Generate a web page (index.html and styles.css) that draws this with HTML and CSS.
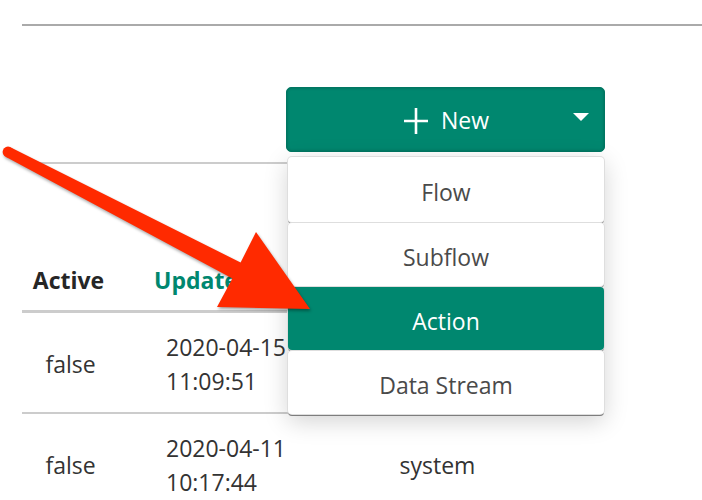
FILE: index.html
```html
<!DOCTYPE html>
<html>
<head>
<meta charset="utf-8">
<link rel="stylesheet" href="styles.css">
</head>
<body>
<div class="page">
  <div class="rule"></div>
  <div class="toolbar">
    <div class="new-wrap">
      <button class="new-btn">
        <svg class="plus" width="24" height="26" viewBox="0 0 24 26"><path d="M12 0V26M0 13H24" stroke="#fff" stroke-width="2.6" fill="none"/></svg>
        <span>New</span>
        <span class="caret"></span>
      </button>
      <div class="menu">
        <div class="item">Flow</div>
        <div class="item">Subflow</div>
        <div class="item active">Action</div>
        <div class="item">Data Stream</div>
      </div>
    </div>
  </div>
  <div class="table">
    <div class="row head">
      <div class="cell c1">Active</div>
      <div class="cell c2 sorted">Updated</div>
      <div class="cell c3"></div>
    </div>
    <div class="row">
      <div class="cell c1">false</div>
      <div class="cell c2 date">2020-04-15<br>11:09:51</div>
      <div class="cell c3"></div>
    </div>
    <div class="row">
      <div class="cell c1">false</div>
      <div class="cell c2 date">2020-04-11<br>10:17:44</div>
      <div class="cell c3">system</div>
    </div>
  </div>
</div>
<svg class="arrow" width="330" height="330" viewBox="0 0 330 330">
  <circle cx="8" cy="152" r="5.4" fill="#ff2a00"/>
  <polygon points="10.4,147.2 240.6,262.5 256,232 310,309 217,307 232.4,278.5 5.6,156.8" fill="#ff2a00"/>
</svg>
</body>
</html>
```
FILE: styles.css
```css
html, body {
  margin: 0;
  padding: 0;
  background: #fff;
  font-family: "Open Sans", "Noto Sans", sans-serif;
  font-size: 23px;
  color: #333;
  overflow: hidden;
}
.page {
  padding-left: 22px;
}
.rule {
  margin-top: 24px;
  height: 2px;
  background: #aaaaaa;
}
.toolbar {
  display: flex;
  padding-top: 61px;
  padding-left: 264px;
}
.new-wrap {
  position: relative;
}
.new-btn {
  position: relative;
  width: 319px;
  height: 65px;
  box-sizing: border-box;
  background: #00876f;
  border: 1px solid #017662;
  border-radius: 5px;
  box-shadow: inset 0 0 3px rgba(0,0,0,0.25);
  color: #fff;
  font-family: inherit;
  font-size: 23px;
  display: flex;
  align-items: center;
  justify-content: center;
  gap: 13px;
  padding: 0 0 0 2px;
}
.new-btn .plus {
  margin-top: 2px;
}
.caret {
  position: absolute;
  right: 15px;
  top: 25px;
  width: 0;
  height: 0;
  border-left: 8px solid transparent;
  border-right: 8px solid transparent;
  border-top: 8px solid #fff;
}
.menu {
  position: absolute;
  left: 2px;
  top: 70px;
  width: 316px;
  display: flex;
  flex-direction: column;
  box-shadow: 0 6px 24px rgba(0,0,0,0.18);
  border-radius: 4px;
  z-index: 2;
}
.item {
  height: 63px;
  margin-bottom: 1px;
  display: flex;
  align-items: center;
  justify-content: center;
  background: #fff;
  color: #4a4a4a;
  border-radius: 4px;
  box-shadow: 0 0 0 1px #dedede, 0 2px 0 #7d7d7d;
  padding-top: 4px;
  box-sizing: border-box;
}
.item:first-child {
  height: 65px;
}
.item.active {
  background: #00876f;
  color: #fff;
}
.table {
  margin-top: 10px;
  width: 543px;
  border-top: 2px solid #cccccc;
}
.row {
  display: grid;
  grid-template-columns: 93px 195px 255px;
  height: 101px;
  border-bottom: 2px solid #cccccc;
  align-items: center;
  padding-top: 3px;
  box-sizing: border-box;
}
.row.head {
  height: 149px;
  border-bottom: 3px solid #cccccc;
  align-items: end;
  padding-top: 0;
  padding-bottom: 14px;
  font-weight: 700;
  color: #262626;
}
.cell.c1 {
  text-align: center;
  padding-left: 4px;
}
.head .cell.c1 {
  padding-left: 0;
}
.cell.c2 {
  padding-left: 51px;
}
.head .cell.c2 {
  padding-left: 39px;
}
.sorted {
  color: #00876f;
}
.cell.c3 {
  text-align: center;
}
.date {
  line-height: 34px;
}
.arrow {
  position: absolute;
  left: 0;
  top: 0;
  z-index: 5;
  filter: drop-shadow(1px 2px 1.5px rgba(0,0,0,0.35));
}
```
